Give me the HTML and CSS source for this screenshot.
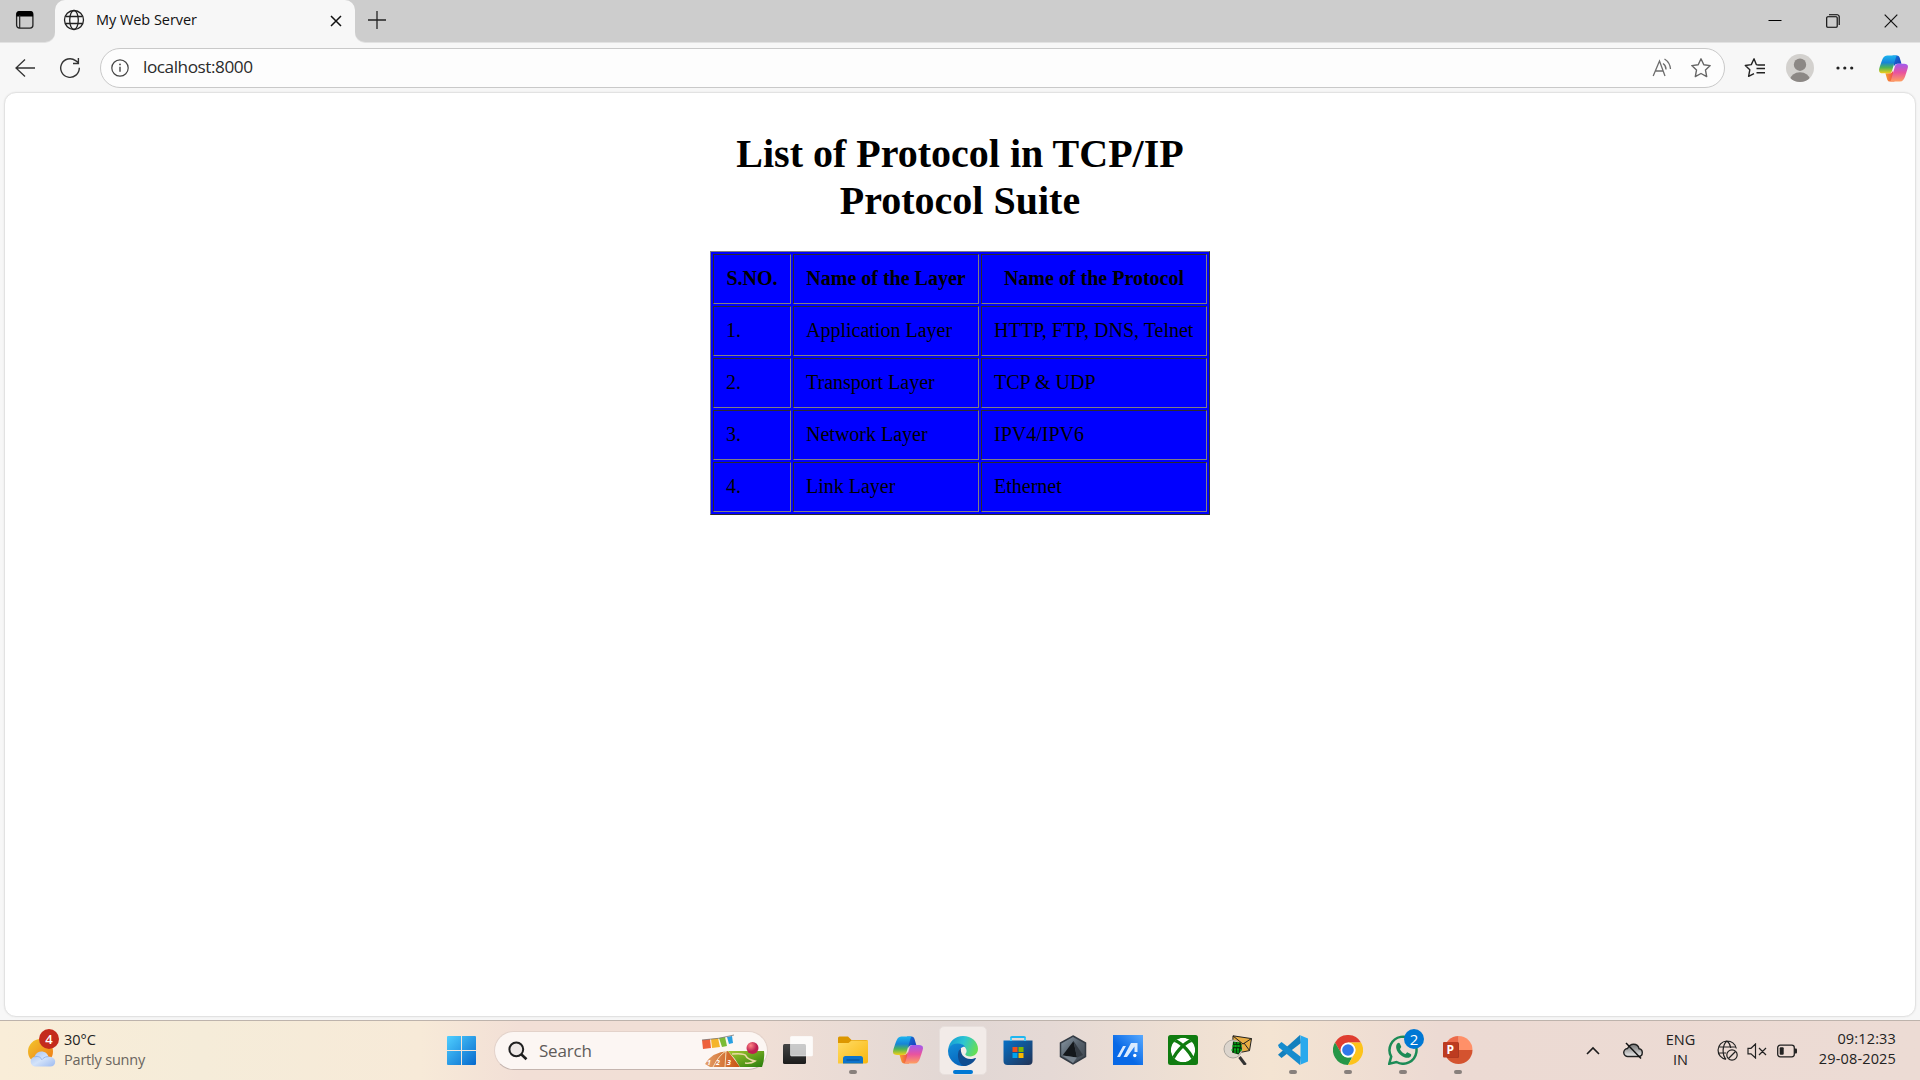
FILE: index.html
```html
<!DOCTYPE html>
<html lang="en">
<head>
<meta charset="utf-8">
<title>My Web Server</title>
<link rel="stylesheet" href="styles.css">
</head>
<body>
<svg class="defs" width="0" height="0" aria-hidden="true">
  <defs>
    <linearGradient id="cpA" x1="0" y1="0" x2="0" y2="1"><stop offset="0" stop-color="#1cb5f0"/><stop offset=".4" stop-color="#1684d8"/><stop offset=".68" stop-color="#4fb455"/><stop offset="1" stop-color="#f5cf18"/></linearGradient>
    <linearGradient id="cpB" x1="0" y1="0" x2="0" y2="1"><stop offset="0" stop-color="#a05bf0"/><stop offset=".5" stop-color="#e9539f"/><stop offset="1" stop-color="#ffa05f"/></linearGradient>
    <linearGradient id="cpC" x1="0" y1="0" x2="1" y2="1"><stop offset="0" stop-color="#1478d8"/><stop offset="1" stop-color="#1937b8"/></linearGradient>
    <linearGradient id="cpD" x1="0" y1="0" x2="1" y2="0"><stop offset="0" stop-color="#f7a32c"/><stop offset="1" stop-color="#ee4050"/></linearGradient>
    <symbol id="copilot" viewBox="0 0 30 28">
      <path d="M14 .5h4.500c1.800 0 2.500 1 3 2.600L23.300 9h-4.100c-1.800 0-3.200 1-3.800 3z" fill="url(#cpC)"/>
      <path d="M16 27.500h-4.600c-1.800 0-2.600-1-3.100-2.700L6.600 19h4.200c1.900 0 3.200-1.200 3.700-3z" fill="url(#cpD)"/>
      <path d="M18.500.5H8.300C5.500.5 4 2.800 2.800 6.300 1.400 10.300 0 14.600 0 16c0 2.200 1.700 3 4 3h6.300c1.700 0 2.700-1 3.200-2.700L17 4.200C17.600 2 18 1 18.500.5z" fill="url(#cpA)"/>
      <path d="M11.400 27.500h10.300c2.800 0 4.300-2.300 5.500-5.800C28.600 17.700 30 13.400 30 12c0-2.200-1.700-3-4-3h-6.300c-1.700 0-2.700 1-3.200 2.700L13 23.800c-.6 2.200-1 3.200-1.600 3.700z" fill="url(#cpB)"/>
    </symbol>
  </defs>
</svg>

<div class="screen">
  <header class="tabstrip">
    <div class="workspace">
      <svg width="20" height="20" viewBox="0 0 20 20"><rect x="1.600" y="1.600" width="16.300" height="16.500" rx="2.800" fill="none" stroke="#222" stroke-width="1.300"/><path d="M1.500 6.500V4a3 3 0 0 1 3-3h10.500a3 3 0 0 1 3 3v2.500z" fill="#000"/><path d="M4.700 5v13" stroke="#222" stroke-width="1.200"/></svg>
    </div>
    <div class="tab">
      <svg class="globe" width="22" height="22" viewBox="0 0 22 22" fill="none" stroke="#222" stroke-width="1.300"><circle cx="11" cy="11" r="9.500"/><ellipse cx="11" cy="11" rx="4.300" ry="9.500"/><path d="M2.500 7.500h17M2.500 14.500h17"/></svg>
      <span class="tab-title">My Web Server</span>
      <svg class="tab-close" width="12" height="12" viewBox="0 0 12 12" stroke="#111" stroke-width="1.500"><path d="M1 1l10 10M11 1L1 11"/></svg>
    </div>
    <div class="strip-rest">
      <svg width="18" height="18" viewBox="0 0 18 18" stroke="#222" stroke-width="1.300"><path d="M9 0v18M0 9h18"/></svg>
      <div class="window-buttons">
        <svg width="14" height="14" viewBox="0 0 14 14" stroke="#000"><path d="M.5 6.500h13"/></svg>
        <svg width="14" height="14" viewBox="0 0 14 14" fill="none" stroke="#000" stroke-width="1.100"><rect x=".7" y="2.800" width="10.500" height="10.500" rx="1"/><path d="M3 .8h8.200a2 2 0 0 1 2 2V11"/></svg>
        <svg width="14" height="14" viewBox="0 0 14 14" stroke="#111" stroke-width="1.200"><path d="M.7.700l12.600 12.600M13.300.700L.7 13.300"/></svg>
      </div>
    </div>
  </header>

  <nav class="toolbar">
    <svg class="back" width="20" height="20" viewBox="0 0 20 20" fill="none" stroke="#333" stroke-width="1.300"><path d="M20 10H1M10 1.500L1 10l9 8.500"/></svg>
    <svg class="reload" width="22" height="22" viewBox="0 0 22 22" fill="none" stroke="#333" stroke-width="1.400"><path d="M20.300 10.800A9.300 9.300 0 1 1 16.600 3.600L19.500 5.800M19.400 1v5.500H14"/></svg>
    <div class="address">
      <svg width="18" height="18" viewBox="0 0 18 18"><circle cx="9" cy="9" r="8.200" fill="none" stroke="#444" stroke-width="1.200"/><path d="M9 7.800v5" stroke="#444" stroke-width="1.400"/><circle cx="9" cy="5.400" r=".9" fill="#444"/></svg>
      <span class="url">localhost:8000</span>
      <svg class="read" width="20" height="20" viewBox="0 0 20 20" fill="none" stroke="#6d6d6d" stroke-width="1.300"><path d="M1.200 18L7.500 3l5.500 15M3.300 13H11M11 5.500a7 7 0 0 1 3 6M12.500 1a13 13 0 0 1 6 10"/></svg>
      <svg class="star" width="22" height="22" viewBox="0 0 22 22" fill="none" stroke="#666" stroke-width="1.400" stroke-linejoin="round"><path d="M11 1.800l2.800 6 6.400.8-4.700 4.500 1.200 6.500L11 16.500l-5.700 3.100 1.200-6.500L1.800 8.600l6.400-.8z"/></svg>
    </div>
    <svg class="favs" width="22" height="22" viewBox="0 0 22 22" fill="none" stroke="#222" stroke-width="1.400" stroke-linejoin="round"><path d="M16 8h-1.700l-2-.4L10 1.800 7.300 7.600l-6 .9 4.500 4.300-1.200 6.600L10 16.600M12.500 11.500h8.500M12.500 15.800h8.500M14 8h7"/></svg>
    <svg class="avatar" width="28" height="28" viewBox="0 0 28 28"><defs><clipPath id="av"><circle cx="14" cy="14" r="14"/></clipPath></defs><g clip-path="url(#av)"><path d="M0 0h28v28H0z" fill="#d3d1ce"/><circle cx="14" cy="10.700" r="6.200" fill="#8c8885"/><ellipse cx="14" cy="25.500" rx="9.800" ry="7.200" fill="#8c8885"/></g></svg>
    <svg class="more" width="18" height="4" viewBox="0 0 18 4" fill="#222"><circle cx="2" cy="2" r="1.600"/><circle cx="8.800" cy="2" r="1.600"/><circle cx="15.700" cy="2" r="1.600"/></svg>
    <svg class="side-copilot" width="29" height="27"><use href="#copilot"/></svg>
  </nav>

  <main class="page">
    <section class="content">
      <h1>List of Protocol in TCP/IP Protocol Suite</h1>
      <table>
        <tr><th class="c-num">S.NO.</th><th class="c-layer">Name of the Layer</th><th class="c-proto">Name of the Protocol</th></tr>
        <tr><td>1.</td><td>Application Layer</td><td>HTTP, FTP, DNS, Telnet</td></tr>
        <tr><td>2.</td><td>Transport Layer</td><td>TCP &amp; UDP</td></tr>
        <tr><td>3.</td><td>Network Layer</td><td>IPV4/IPV6</td></tr>
        <tr><td>4.</td><td>Link Layer</td><td>Ethernet</td></tr>
      </table>
    </section>
  </main>

  <footer class="taskbar">
    <div class="weather">
      <div class="weather-icon">
        <svg width="28" height="28" viewBox="0 0 28 28"><defs><linearGradient id="sun" x1="0" y1="0" x2="1" y2="1"><stop offset="0" stop-color="#f2c72e"/><stop offset="1" stop-color="#ef7613"/></linearGradient><linearGradient id="cl" x1="0" y1="0" x2="1" y2="1"><stop offset="0" stop-color="#a3bff0"/><stop offset=".5" stop-color="#d3e3fa"/><stop offset="1" stop-color="#9dbaf0"/></linearGradient></defs><circle cx="12.500" cy="12.500" r="12.500" fill="url(#sun)"/><path d="M7 27.500a5 5 0 0 1-.5-9.800c1-3.500 4-5.200 7-5.200 3.500 0 6.300 2.200 7 5.300 4 0 6.700 2 6.700 5s-2 4.700-5 4.700z" fill="url(#cl)"/><path d="M6.500 18c4-1.500 6.500.5 7.500 3M14.500 20c2-2 4-2.500 6-2.200" fill="none" stroke="#86a9e8" stroke-width=".8"/></svg>
        <span class="badge badge-red">4</span>
      </div>
      <div class="weather-text"><span class="temp">30°C</span><span class="cond">Partly sunny</span></div>
    </div>

    <svg class="start" width="29" height="29" viewBox="0 0 29 29"><defs><linearGradient id="win" x1="0" y1="0" x2="1" y2="1"><stop offset="0" stop-color="#4fcfff"/><stop offset="1" stop-color="#0669cd"/></linearGradient></defs><path d="M1 0h13v14H0V1a1 1 0 0 1 1-1zM15 0h13a1 1 0 0 1 1 1v13H15zM0 15h14v14H1a1 1 0 0 1-1-1zM15 15h14v13a1 1 0 0 1-1 1H15z" fill="url(#win)"/></svg>

    <div class="search">
      <svg width="20" height="20" viewBox="0 0 20 20" fill="#eee8e6" stroke="#202020" stroke-width="2"><circle cx="8.300" cy="8.300" r="6.900"/><path d="M13.200 13.200l5.300 5" stroke-width="2.600"/></svg>
      <span>Search</span>
      <svg class="sports" width="64" height="34" viewBox="0 0 64 34">
        <defs><linearGradient id="trk"><stop offset="0" stop-color="#e3a06b"/><stop offset="1" stop-color="#c9520f"/></linearGradient><linearGradient id="grs" x1="0" y1="0" x2="1" y2="1"><stop offset="0" stop-color="#a5c830"/><stop offset="1" stop-color="#277c0c"/></linearGradient><radialGradient id="bal" cx=".35" cy=".3"><stop offset="0" stop-color="#ff8584"/><stop offset="1" stop-color="#bd2051"/></radialGradient></defs>
        <path d="M1 6l8-1 1 9-8 1z" fill="#ee613c"/><path d="M10 5l7-1 2 9-8 1z" fill="#f5b52b"/><path d="M18 4l6-1 2 9-5 1z" fill="#7abb36"/><path d="M26 3l5-1 1 7-4 1z" fill="#279fe1"/><path d="M1 6q18-1 32-5" fill="none" stroke="#777" stroke-width=".8"/>
        <path d="M4 30q7-12 23-13l12 16H9z" fill="url(#trk)"/><path d="M27 17h36q1 8-2 16H39q-5-9-12-16z" fill="url(#grs)"/>
        <path d="M12 33q6-12 13-16M24 33l1-16" fill="none" stroke="#f8e8c4" stroke-width=".9"/>
        <path d="M31 20q13-1 14 2t9 5q-4 3-10 2" fill="none" stroke="#ead9a4" stroke-width="1.600"/>
        <text x="15" y="31" class="lane">2</text><text x="26" y="31" class="lane">3</text><text x="6" y="31" class="lane">1</text>
        <circle cx="51.500" cy="14" r="6" fill="url(#bal)"/>
      </svg>
    </div>

    <div class="apps">
      <div class="app"><svg width="30" height="30" viewBox="0 0 30 30"><defs><linearGradient id="tv" x1="0" y1="0" x2="0" y2="1"><stop offset="0" stop-color="#444"/><stop offset="1" stop-color="#1c1c1c"/></linearGradient></defs><rect x="0" y="9" width="23" height="20" rx="1.500" fill="url(#tv)"/><rect x="7.500" y="1.500" width="22" height="19.500" rx="1" fill="#fff" fill-opacity=".72" stroke="#fff" stroke-opacity=".5"/><path d="M23 1.500h6.500v19.500H23V1.500M7.500 1.500H23V9H7.500z" fill="#fff" fill-opacity=".5"/></svg></div>
      <div class="app running"><svg width="30" height="30" viewBox="0 0 30 30"><defs><linearGradient id="fo" x1="0" y1="0" x2="1" y2="1"><stop offset="0" stop-color="#ffdc67"/><stop offset="1" stop-color="#f9b70d"/></linearGradient></defs><path d="M0 3a1.500 1.500 0 0 1 1.500-1.500H10L13.500 5H28a2 2 0 0 1 2 2v4H0z" fill="#dc9700"/><path d="M0 8h10.500l3-2.500H30v21a2 2 0 0 1-2 2H0z" fill="url(#fo)"/><path d="M5 28.500v-5a2.500 2.500 0 0 1 2.500-2.500h15a2.500 2.500 0 0 1 2.500 2.500v5z" fill="#0d74cb"/><path d="M8.500 25h13" stroke="#07549d" stroke-width="1.300"/></svg></div>
      <div class="app"><svg width="30" height="30" viewBox="0 0 30 30"><use href="#copilot" y="1" width="30" height="28"/></svg></div>
      <div class="app running active"><svg width="30" height="30" viewBox="0 0 30 30"><defs><linearGradient id="e1" x1="0" y1=".2" x2="1" y2=".5"><stop offset="0" stop-color="#159bd5"/><stop offset=".5" stop-color="#2cc5d2"/><stop offset="1" stop-color="#65de55"/></linearGradient><linearGradient id="e2" x1="0" y1="0" x2=".4" y2="1"><stop offset="0" stop-color="#138fd9"/><stop offset="1" stop-color="#0766bd"/></linearGradient></defs><path d="M.2 13.500C1 5.600 7.100 0 15 0c8.700 0 15 6 15 12.800 0 4.700-3.500 7.600-7.600 7.600-3.300 0-5.100-1.200-5.100-2.200 0-.8 1.300-1.100 1.300-3.300C18.600 11.500 14.500 8 9.500 8 5 8 1.700 10.500.2 13.500z" fill="url(#e1)"/><path d="M0 15c0-4 4.200-7.500 9.500-7.500 4 0 6.500 1.500 7.800 3.400-3-.6-6.500 2-6.500 6.400 0 5 3.500 10 10 11.500A15 15 0 0 1 0 15z" fill="url(#e2)"/><path d="M10 18c.2-3.200 1.600-5 3-6-1 5 2.500 11 9.500 11 2 0 3.600-.5 5-1 .5-.1.600.2.300.700C25 27.500 20 30 15.500 30 11.500 28 9.500 22.500 10 18z" fill="#104d91"/></svg></div>
      <div class="app"><svg width="30" height="30" viewBox="0 0 30 30"><defs><linearGradient id="st" x1="0" y1="0" x2="1" y2="1"><stop offset="0" stop-color="#0671c7"/><stop offset="1" stop-color="#213255"/></linearGradient></defs><path d="M8 8V3a1 1 0 0 1 1-1h12a1 1 0 0 1 1 1v5" fill="none" stroke="#1fb6ef" stroke-width="2"/><path d="M.5 5.500h29V26a4 4 0 0 1-4 4h-21a4 4 0 0 1-4-4z" fill="url(#st)"/><path d="M8 3v3M22 3v3" stroke="#40ccf8" stroke-width="2"/><path d="M9.500 12h5v5h-5z" fill="#f1511b"/><path d="M15.500 12h5v5h-5z" fill="#80b900"/><path d="M9.500 18h5v5h-5z" fill="#00a3ee"/><path d="M15.500 18h5v5h-5z" fill="#fbb800"/></svg></div>
      <div class="app"><svg width="30" height="30" viewBox="0 0 30 30"><defs><linearGradient id="ac" x1="0" y1="0" x2="1" y2="1"><stop offset="0" stop-color="#8c9ba8"/><stop offset=".5" stop-color="#56616c"/><stop offset="1" stop-color="#3b434b"/></linearGradient></defs><path d="M15 1L27.500 8v13.500L15 29 2.500 21.500V8z" fill="url(#ac)" stroke="#333b44" stroke-width="1.500"/><path d="M15.500 6L4.500 20.500l14.500 2z" fill="#14181c"/><path d="M15.500 6L19 22.500l6-2.500z" fill="#343b43"/><path d="M4.500 20.500l14.500 2-4 5.500z" fill="#76828d"/></svg></div>
      <div class="app"><svg width="30" height="30" viewBox="0 0 30 30"><defs><linearGradient id="as" x1="0" y1="1" x2="1" y2="0"><stop offset=".4" stop-color="#0869e6"/><stop offset="1" stop-color="#57a9ff"/></linearGradient></defs><path d="M0 0h30v30H0z" fill="url(#as)"/><path d="M4 22L10 11h3L7 22zM10.500 22L18 8h6.500v9h-3v-5.500L14 22z" fill="#d9ebff"/><circle cx="21.800" cy="20.500" r="1.700" fill="#fff"/></svg></div>
      <div class="app"><svg width="30" height="30" viewBox="0 0 30 30"><defs><clipPath id="xb"><circle cx="15" cy="15" r="12.200"/></clipPath></defs><rect width="30" height="30" rx="2.500" fill="#107c10"/><g clip-path="url(#xb)"><circle cx="15" cy="15" r="12.200" fill="#fff"/><path d="M4 5.500C9 4 21 14 26 26M26 5.500C21 4 9 14 4 26" fill="none" stroke="#107c10" stroke-width="3.200"/></g></svg></div>
      <div class="app"><svg width="30" height="30" viewBox="0 0 30 30"><path d="M10 .8l18.500 2.800-2 12L9.500 19z" fill="#e8ad43" stroke="#222" stroke-width="1"/><path d="M10 1l10 8 8.500-5.500M9.500 18l9-9M26.500 15.500L21 8" fill="none" stroke="#222" stroke-width="1"/><circle cx="10" cy="14" r="9" fill="#dcd5cd" stroke="#aba69f"/><path d="M10 6.500l8 1 1 7-3.500 5-6.500-2z" fill="#053807"/><path d="M12 7v12M15 7v12M9 11h10M8 15h11" stroke="#00d320" stroke-width="1" stroke-dasharray="2 1"/><path d="M16.500 22L22.500 30" stroke="#333" stroke-width="3"/></svg></div>
      <div class="app running"><svg width="30" height="30" viewBox="0 0 30 30"><path d="M0 19.700L22 0l1 8L3.500 23z" fill="#1480bd"/><path d="M0 10l3.500-3L23 22l-1 8L1 12.500z" fill="#168cce"/><path d="M21.500 0L30 3.500v23L21.500 30c.9-.5 1-1 1-2V2c0-1-.3-1.500-1-2z" fill="#29a9ed"/></svg></div>
      <div class="app running"><svg width="30" height="30" viewBox="0 0 30 30"><path d="M2 7.500A15 15 0 0 1 28 7.500H15L8.500 19z" fill="#df3d30"/><path d="M2 7.500l6.500 11.300A7.500 7.500 0 0 0 15 22.500h4L15 30A15 15 0 0 1 2 7.500z" fill="#269647"/><path d="M28 7.500A15 15 0 0 1 15 30l6.500-11.200A7.500 7.500 0 0 0 19.500 9l-4.500-1.500z" fill="#fdc31b"/><circle cx="15" cy="15" r="7.500" fill="#fff"/><circle cx="15" cy="15" r="5.800" fill="#3078eb"/></svg></div>
      <div class="app running"><svg width="30" height="30" viewBox="0 0 30 30"><path d="M1.300 28.700l1.900-7A13.500 13.500 0 1 1 8.500 27z" fill="none" stroke="#1c8b56" stroke-width="2.500"/><path d="M9.500 8.300c1-.8 1.800-.7 2.300.2l1.400 3c.4 1-1.400 2.200-1.200 2.800 1 2.300 3 4 5.200 4.800.8.200 1.700-2 2.500-1.700l3 1.500c1 .5.500 2-.5 3-2.500 2-6 .5-9-1.500-2.500-2-4.500-4.500-5-7.500-.2-1.700.1-3.500 1.300-4.600z" fill="#1c8b56"/></svg><span class="badge badge-blue">2</span></div>
      <div class="app running"><svg width="30" height="30" viewBox="0 0 30 30"><path d="M15.500 1v14H29.500A14 14 0 0 0 15.500 1z" fill="#ff9068"/><path d="M15.500 1a14 14 0 0 0-14 14h14z" fill="#ec6a49"/><path d="M1.500 15a14 14 0 0 0 28 0z" fill="#d4532f"/><path d="M7 7h7.500A1.500 1.500 0 0 1 16 8.500v13a1.500 1.500 0 0 1-1.500 1.500H4z" fill="#a93821"/><rect x="0" y="7" width="15" height="15.500" rx="1" fill="#bd3b20"/><text x="7.300" y="19" class="ppt">P</text></svg></div>
    </div>

    <div class="tray">
      <svg class="chev" width="14" height="9" viewBox="0 0 14 9" fill="none" stroke="#1c1c1c" stroke-width="1.600"><path d="M1 8l6-6 6 6"/></svg>
      <svg class="cloud" width="20" height="18" viewBox="0 0 20 18"><defs><linearGradient id="od" x1="0" y1="0" x2="0" y2="1"><stop offset=".2" stop-color="#8a8a8a"/><stop offset=".6" stop-color="#b9b9b9"/><stop offset="1" stop-color="#eee"/></linearGradient></defs><path d="M5 14.500a4 4 0 0 1-.5-8C6 3.500 8 2.200 10.500 2.200c3 0 5 1.800 5.500 4.500 2.200.3 3.300 2 3.300 3.800 0 2.500-1.700 4-4 4z" fill="url(#od)" stroke="#222" stroke-width="1.400"/><path d="M3 1l15 15.500" stroke="#111" stroke-width="1.500"/></svg>
      <div class="lang"><span>ENG</span><span>IN</span></div>
      <svg class="net" width="21" height="21" viewBox="0 0 21 21" fill="none" stroke="#222" stroke-width="1.200"><path d="M9 19.300A9.200 9.200 0 1 1 19.300 8.500M9 19.300C5 15 5 5 10 1c2 1.500 3.400 4.200 3.700 7M1.700 7h17M1.700 13H9"/><circle cx="15" cy="15" r="5.200"/><path d="M11.500 18.500l7-7"/></svg>
      <svg class="vol" width="20" height="16" viewBox="0 0 20 16" fill="none" stroke="#222" stroke-width="1.200"><path d="M1 5.300h3L8.500 1v14L4 10.800H1zM12 5l7 7M19 5l-7 7"/></svg>
      <svg class="bat" width="21" height="14" viewBox="0 0 21 14"><rect x=".7" y="1.200" width="16.600" height="11.600" rx="2.500" fill="none" stroke="#222" stroke-width="1.300"/><rect x="2.700" y="3.300" width="4" height="7.500" rx="1" fill="#222"/><path d="M17.500 4.500h1.500a1 1 0 0 1 1 1v3a1 1 0 0 1-1 1h-1.500z" fill="#222"/></svg>
      <div class="clock"><span>09:12:33</span><span>29-08-2025</span></div>
    </div>
  </footer>
</div>
</body>
</html>
```
FILE: styles.css
```css
* { box-sizing: border-box; }
body { margin: 0; background: #f7f7f7; font-family: "Open Sans", "Noto Sans", sans-serif; }
svg { display: block; flex: none; }
.defs { position: absolute; }

.screen { width: 1920px; height: 1080px; display: flex; flex-direction: column; overflow: hidden; background: #f7f7f7; }

/* Tab strip */
.tabstrip { display: flex; height: 43px; background: linear-gradient(#cdcdcd 22px, #f7f7f7 22px); }
.workspace { width: 55px; height: 42px; padding: 10px 0 0 15px; background: #cdcdcd; border-bottom-right-radius: 10px; box-shadow: 0 1px 0 #e2e2e2; }
.tab { width: 300px; height: 43px; display: flex; align-items: flex-start; padding: 0 13px 0 8px; background: #f7f7f7; border-radius: 10px 10px 0 0; }
.globe { margin-top: 9px; }
.tab-title { margin-left: 11px; line-height: 40px; font-size: 14.500px; letter-spacing: -0.050px; color: #111; white-space: nowrap; }
.tab-close { margin: 15px 0 0 auto; }
.strip-rest { flex: 1; height: 42px; display: flex; padding: 11px 22px 0 13px; background: #cdcdcd; border-bottom-left-radius: 10px; box-shadow: 0 1px 0 #e2e2e2; }
.window-buttons { display: flex; gap: 44px; margin-left: auto; padding-top: 3px; }

/* Address bar */
.toolbar { height: 49px; display: flex; align-items: center; padding: 1px 12px 0 15px; }
.back { margin-top: -1px; }
.reload { margin-left: 24px; }
.address { width: 1625px; height: 40px; margin-left: 19px; padding: 0 12px 0 10px; display: flex; align-items: center; background: #fdfdfd; border: 1px solid #c9c9c9; border-radius: 20px; }
.url { margin: -2px 0 0 14px; font-size: 17.200px; letter-spacing: -0.450px; line-height: 38px; color: #2b2b2b; }
.read { margin-left: auto; }
.star { margin-left: 18px; }
.favs { margin-left: 19px; }
.avatar { margin-left: 20px; }
.more { margin-left: 22px; }
.side-copilot { margin-left: auto; }

/* Served page */
.page { width: 1912px; height: 925px; margin: 0 auto; padding-top: 37px; background: #fff; border: 1px solid #e2e2e2; border-radius: 12px; box-shadow: 0 0 2px rgba(0, 0, 0, .08); font-family: "Liberation Serif", "Times New Roman", serif; color: #000; }
.content { width: 500px; margin: 0 auto; }
h1 { margin: 0 0 27px; font-size: 40px; line-height: 47px; font-weight: bold; text-align: center; }
table { width: 500px; table-layout: fixed; border-collapse: separate; border-spacing: 2px; background: #00f; border: 1px solid; border-color: #808080 #2c2c2c #2c2c2c #808080; font-size: 20px; }
th, td { height: 50px; padding: 0 0 2px 12px; border: 1px solid; border-color: #2c2c2c #808080 #808080 #2c2c2c; line-height: 23px; text-align: left; white-space: nowrap; }
th { padding-left: 0; text-align: center; }
.c-num { width: 78px; }
.c-layer { width: 186px; }
.c-proto { width: 226px; }

/* Taskbar */
.taskbar { height: 60px; margin-top: 3px; display: flex; align-items: center; border-top: 1px solid #bdb3ac; background: linear-gradient(90deg, #f9edd8 0, #f5ecd9 200px, #f7ead8 420px, #f2dfd6 520px, #f0dfd6 760px, #e1d7d4 960px, #e5d9d5 1050px, #f4e4d2 1270px, #ecdad3 1440px, #ecdbd4 1920px); }
.weather { width: 447px; display: flex; padding-left: 28px; }
.weather-icon { position: relative; width: 28px; padding-top: 8px; }
.weather-text { display: flex; flex-direction: column; margin: -1px 0 0 8px; font-size: 14.500px; line-height: 20px; color: #222; }
.cond { color: #6a655e; letter-spacing: -0.200px; }
.badge { position: absolute; width: 20px; height: 20px; border-radius: 50%; color: #fff; text-align: center; font-size: 13px; line-height: 20px; }
.badge-red { left: 11px; top: -2px; background: #c42b1c; font-weight: 600; }
.badge-blue { left: 28.500px; top: 8px; background: #0078d4; font-size: 15px; }
.search { width: 274px; height: 39px; margin-left: 17.500px; padding: 0 2px 0 13px; display: flex; align-items: center; background: #fcf6f3; border: 1px solid #e3d2ca; border-bottom-color: #c5b5af; border-radius: 20px; font-size: 17px; letter-spacing: -0.200px; color: #5f5b59; }
.search span { margin-left: 11.500px; }
.sports { margin-left: auto; }
.lane { font-size: 7px; font-weight: bold; font-style: italic; fill: #fff; }
.apps { display: flex; margin-left: 3px; }
.app { position: relative; width: 55px; height: 59px; display: flex; flex-direction: column; align-items: center; padding-top: 14px; }
.app.running::after { content: ""; width: 8px; height: 4px; margin-top: 5px; border-radius: 2px; background: #88807c; }
.app.active { width: 48px; height: 49px; margin: 5px 3.500px 0; padding-top: 9px; background: #f2ebe8; border: 1px solid #e7dfdc; border-radius: 5px; }
.app.active::after { width: 20px; margin-top: 4px; background: #0078d4; }
.ppt { font-size: 12px; font-weight: bold; text-anchor: middle; fill: #fff; }
.tray { flex: 1; display: flex; align-items: center; padding-right: 24px; font-size: 14.500px; line-height: 20px; color: #222; }
.chev { margin-left: 100px; }
.cloud { margin-left: 23px; }
.lang { width: 36px; margin: -1px 0 0 20px; display: flex; flex-direction: column; align-items: center; }
.net { margin-left: 18px; }
.vol { margin-left: 9px; }
.bat { margin-left: 10px; }
.clock { display: flex; flex-direction: column; align-items: flex-end; margin: -3px 0 0 auto; letter-spacing: 0.150px; }
```
